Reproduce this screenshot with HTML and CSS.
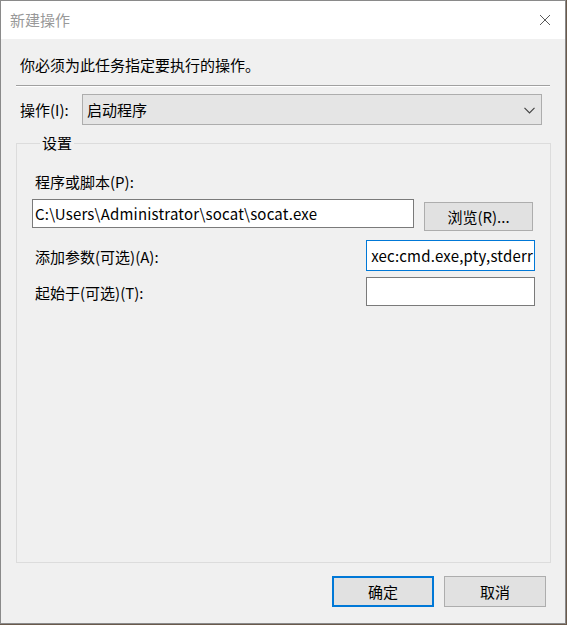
FILE: index.html
```html
<!DOCTYPE html>
<html lang="zh-CN">
<head>
<meta charset="utf-8">
<title>新建操作</title>
<link rel="stylesheet" href="styles.css">
</head>
<body>
<div class="window">
  <div class="titlebar">
    <span class="title">新建操作</span>
    <svg class="close" width="12" height="12" viewBox="0 0 12 12"><path d="M1 1L11 11M11 1L1 11" stroke="#5a5a5a" stroke-width="1" fill="none"/></svg>
  </div>
  <div class="content">
    <div class="intro">你必须为此任务指定要执行的操作。</div>
    <div class="separator"></div>
    <div class="action-row">
      <span class="label">操作(I):</span>
      <div class="select">
        <span>启动程序</span>
        <svg class="chevron" width="11" height="7" viewBox="0 0 11 7"><path d="M0.5 0.8L5.5 5.8L10.5 0.8" stroke="#444" stroke-width="1.2" fill="none"/></svg>
      </div>
    </div>
    <fieldset class="group">
      <legend>设置</legend>
      <div class="field-label">程序或脚本(P):</div>
      <div class="program-row">
        <div class="textbox wide">C:\Users\Administrator\socat\socat.exe</div>
        <div class="button browse">浏览(R)...</div>
      </div>
      <div class="opt-row first">
        <span class="field-label inline">添加参数(可选)(A):</span>
        <div class="textbox short focus">xec:cmd.exe,pty,stderr</div>
      </div>
      <div class="opt-row second">
        <span class="field-label inline">起始于(可选)(T):</span>
        <div class="textbox short small"></div>
      </div>
    </fieldset>
    <div class="buttons">
      <div class="button dialog default">确定</div>
      <div class="button dialog">取消</div>
    </div>
  </div>
</div>
</body>
</html>
```

FILE: styles.css
```css
html, body {
  margin: 0;
  padding: 0;
  background: #6a5a4c;
}
body {
  width: 567px;
  height: 625px;
  overflow: hidden;
  font-family: "Noto Sans CJK SC", sans-serif;
  font-size: 15px;
  color: #000;
}
.window {
  box-sizing: border-box;
  width: 566px;
  height: 624px;
  border: 1px solid #8a8a8a;
  background: #f0f0f0;
  display: flex;
  flex-direction: column;
}
.titlebar {
  height: 38px;
  background: #fff;
  display: flex;
  align-items: center;
  justify-content: space-between;
  padding: 0 14px 0 9px;
  flex: none;
}
.title {
  color: #999;
  font-size: 15px;
  line-height: 20px;
  margin-top: -1px;
}
.close {
  display: block;
  margin-top: -1px;
}
.content {
  flex: 1;
  display: flex;
  flex-direction: column;
  padding: 0 15px 16px 15px;
}
.intro {
  margin-top: 16px;
  padding-left: 4px;
  line-height: 20px;
}
.separator {
  margin-top: 10px;
  height: 1px;
  background: #a0a0a0;
  border-bottom: 1px solid #fff;
}
.action-row {
  margin-top: 7px;
  display: grid;
  grid-template-columns: 66px 460px;
  align-items: center;
}
.label {
  padding-left: 4px;
  line-height: 20px;
}
.select {
  box-sizing: border-box;
  height: 31px;
  background: #e5e5e5;
  border: 1px solid #adadad;
  display: flex;
  align-items: center;
  justify-content: space-between;
  padding: 0 6px 0 4px;
  line-height: 20px;
}
.chevron {
  display: block;
  margin-top: 1px;
}
.group {
  margin: 8px -1px 0 0;
  padding: 0 15px;
  border: 1px solid #dcdcdc;
  flex: 1;
  min-width: 0;
}
.group legend {
  margin-left: 8px;
  padding: 0 2px;
  line-height: 20px;
}
.field-label {
  line-height: 20px;
  padding-left: 3px;
  margin-top: 19px;
}
.field-label.inline {
  margin-top: 2px;
}
.program-row {
  margin-top: 7px;
  display: flex;
  align-items: flex-start;
  gap: 10px;
}
.textbox {
  box-sizing: border-box;
  background: #fff;
  border: 1px solid #7a7a7a;
  height: 29px;
  line-height: 27px;
  padding: 0 2px;
  white-space: nowrap;
  overflow: hidden;
  letter-spacing: 0.2px;
}
.textbox.wide {
  width: 382px;
}
.textbox.short {
  width: 169px;
}
.textbox.focus {
  height: 31px;
  line-height: 29px;
  border-color: #0078d7;
  text-align: right;
  padding-right: 1px;
}
.button {
  box-sizing: border-box;
  background: #e1e1e1;
  border: 1px solid #adadad;
  display: flex;
  align-items: center;
  justify-content: center;
  line-height: 20px;
}
.browse {
  margin-top: 3px;
  width: 109px;
  height: 29px;
}
.opt-row {
  display: flex;
  justify-content: space-between;
  align-items: center;
}
.opt-row.first {
  margin-top: 9px;
}
.opt-row.second {
  margin-top: 6px;
}
.buttons {
  margin-top: 13px;
  display: flex;
  justify-content: flex-end;
  gap: 10px;
  padding-right: 4px;
}
.dialog {
  width: 102px;
  height: 31px;
}
.dialog.default {
  border: 2px solid #0078d7;
}
```
